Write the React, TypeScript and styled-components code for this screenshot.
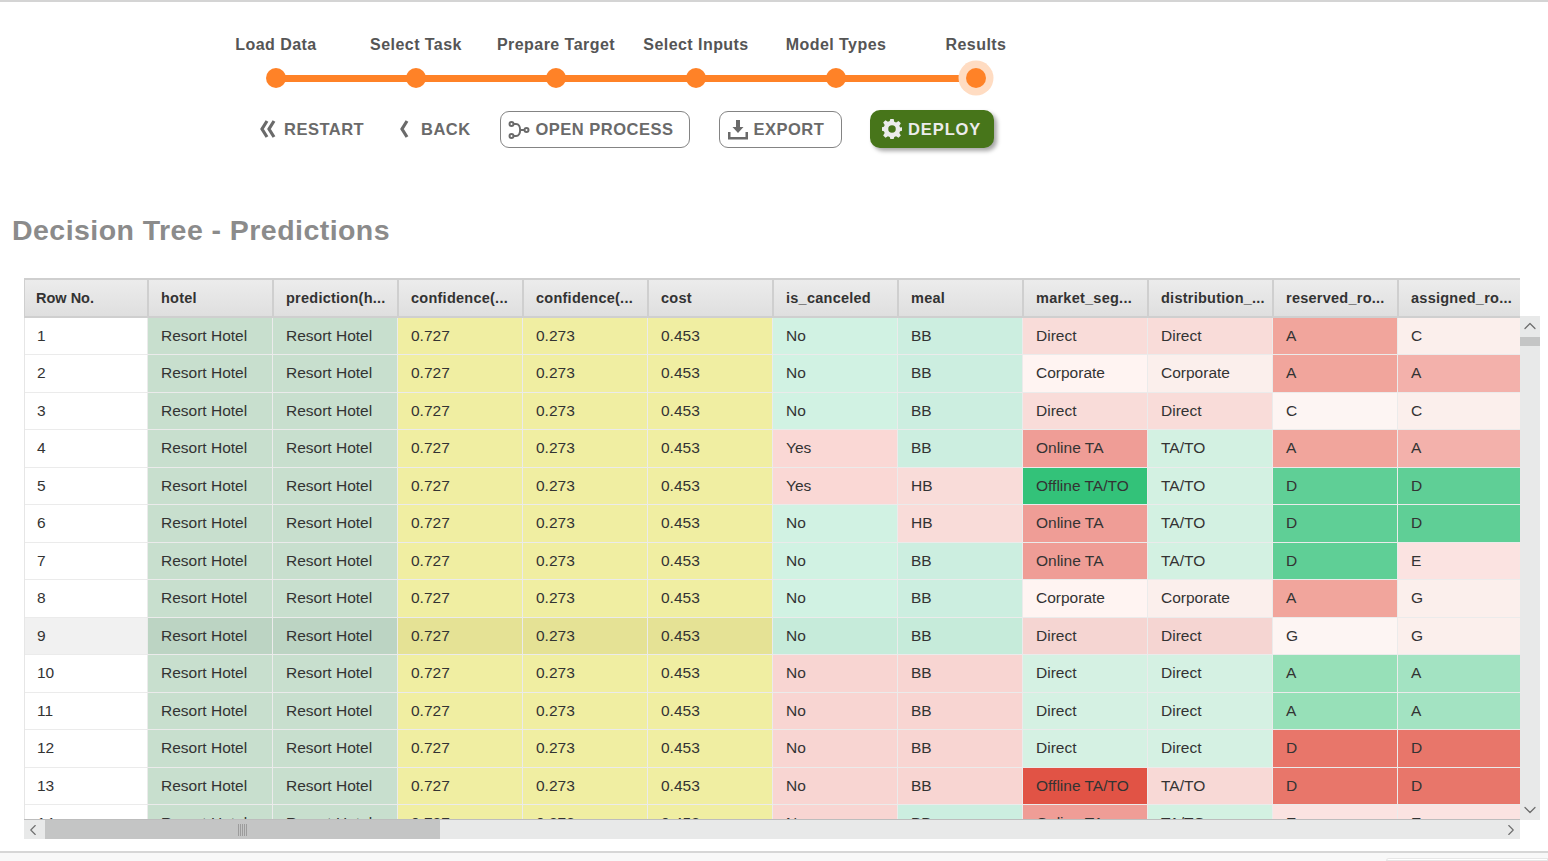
import React from "react";
import styled, { createGlobalStyle } from "styled-components";
import { ChevronLeft, ChevronRight, ChevronUp, ChevronDown } from "lucide-react";

const Global = createGlobalStyle`
  html, body {
    margin: 0;
    padding: 0;
    background: #fff;
    font-family: "Liberation Sans", Arial, sans-serif;
  }
`;

const Page = styled.div`
  width: 1548px;
  height: 861px;
  overflow: hidden;
  display: flex;
  flex-direction: column;
  border-top: 2px solid #d4d4d4;
  box-sizing: border-box;
`;

const Wizard = styled.div`
  padding: 33px 0 0 206px;
`;

const Steps = styled.div`
  display: grid;
  grid-template-columns: repeat(6, 140px);
  width: 840px;
`;

const Step = styled.div`
  display: flex;
  flex-direction: column;
  align-items: center;
  gap: 13px;
`;

const StepLabel = styled.div`
  font-size: 16px;
  line-height: 20px;
  font-weight: 700;
  color: #555;
  letter-spacing: 0.45px;
  white-space: nowrap;
`;

const Track = styled.div<{ $last?: boolean }>`
  position: relative;
  width: 100%;
  height: 20px;
  display: flex;
  justify-content: center;
  align-items: center;

  &::after {
    content: "";
    display: ${(p) => (p.$last ? "none" : "block")};
    position: absolute;
    left: 50%;
    top: 6.5px;
    width: 100%;
    height: 7px;
    background: #ff8227;
  }
`;

const Dot = styled.div<{ $active?: boolean }>`
  position: relative;
  z-index: 1;
  width: 20px;
  height: 20px;
  border-radius: 50%;
  background: #ff8227;
  box-shadow: ${(p) => (p.$active ? "0 0 0 7.5px #ffdcc2" : "none")};
`;

const Actions = styled.div`
  display: flex;
  align-items: center;
  margin: 21px 0 0 53px;
  height: 40px;
`;

const PlainAction = styled.div<{ $w: number; $gap: number }>`
  width: ${(p) => p.$w}px;
  display: flex;
  align-items: center;
  gap: ${(p) => p.$gap}px;
  font-size: 16.5px;
  font-weight: 700;
  color: #6a6a6a;
  letter-spacing: 0.5px;
`;

const OutlineAction = styled.div<{ $w: number; $gap: number; $mr: number }>`
  box-sizing: border-box;
  width: ${(p) => p.$w}px;
  height: 37px;
  margin: 1px ${(p) => p.$mr}px 0 0;
  padding-left: 6.5px;
  border: 1.5px solid #848484;
  border-radius: 9px;
  display: flex;
  align-items: center;
  gap: ${(p) => p.$gap}px;
  font-size: 16.5px;
  font-weight: 700;
  color: #6a6a6a;
  letter-spacing: 0.5px;
`;

const DeployAction = styled.div`
  box-sizing: border-box;
  width: 124px;
  height: 38px;
  padding-left: 12px;
  border-radius: 10px;
  background: #47751a;
  box-shadow: 3px 3px 4px rgba(0, 0, 0, 0.35);
  display: flex;
  align-items: center;
  gap: 6px;
  font-size: 16.5px;
  font-weight: 700;
  color: #ececec;
  letter-spacing: 0.9px;
`;

const Title = styled.h1`
  margin: 63px 0 0 12px;
  font-size: 28.5px;
  line-height: 36px;
  font-weight: 700;
  color: #8b8b8b;
  letter-spacing: 0.45px;
`;

const GridWrap = styled.div`
  margin: 30px 0 0 24px;
  display: grid;
  grid-template-columns: 1496px 20px;
  grid-template-rows: 542px 19px;
  width: 1516px;
`;

const TableClip = styled.div`
  overflow: hidden;
  border-bottom: 1px solid #bdbdbd;
  box-sizing: border-box;
`;

const HeaderRow = styled.div`
  display: grid;
  grid-template-columns: 124px repeat(11, 125px);
  height: 39.5px;
  box-sizing: border-box;
  border-top: 2px solid #cfcfcf;
  border-bottom: 2px solid #cfcfcf;
  border-left: 1px solid #cfcfcf;
  background: linear-gradient(#ececec, #dfdfdf);
`;

const HeaderCell = styled.div`
  box-sizing: border-box;
  padding-left: 12px;
  border-right: 2px solid #cfcfcf;
  display: flex;
  align-items: center;
  font-size: 14.5px;
  font-weight: 700;
  letter-spacing: 0.25px;
  color: #333;
  white-space: nowrap;
  overflow: hidden;

  &:first-child {
    padding-left: 11px;
    letter-spacing: 0;
  }

  &:last-child {
    border-right: none;
  }
`;

const Row = styled.div<{ $hover?: boolean }>`
  display: grid;
  grid-template-columns: 123px repeat(11, 125px);
  height: 37.5px;
  box-sizing: border-box;
  border-left: 1px solid #e6e6e6;
  background: ${(p) => (p.$hover ? "#f1f1f1" : "#fff")};
`;

const Cell = styled.div<{ $bg?: string }>`
  box-sizing: border-box;
  padding-left: 13px;
  display: flex;
  align-items: center;
  font-size: 15.5px;
  color: #333;
  white-space: nowrap;
  background: ${(p) => p.$bg || "transparent"};
  border-right: 1.5px solid #ebebeb;
  border-bottom: 1.5px solid #ebebeb;

  &:first-child {
    padding-left: 12px;
  }

  &:last-child {
    border-right: none;
  }
`;

const VTrack = styled.div`
  background: #e8e9e9;
  margin-top: 38px;
  display: flex;
  flex-direction: column;
  justify-content: space-between;
  align-items: center;
  position: relative;
  color: #6e6e6e;
`;

const VThumb = styled.div`
  position: absolute;
  top: 21px;
  left: 0;
  width: 100%;
  height: 9px;
  background: #c4c5c5;
`;

const HTrack = styled.div`
  background: #e8e9e9;
  display: flex;
  align-items: center;
  justify-content: space-between;
  color: #6e6e6e;
  position: relative;
`;

const HThumb = styled.div`
  position: absolute;
  left: 21px;
  top: 0;
  width: 395px;
  height: 100%;
  background: #c4c5c5;
  display: flex;
  align-items: center;
  justify-content: center;
`;

const Grip = styled.div`
  width: 9px;
  height: 12px;
  background: repeating-linear-gradient(90deg, #9c9c9c 0 1px, transparent 1px 2px);
`;

const Footer = styled.div`
  margin-top: 12px;
  flex: 1;
  border-top: 2px solid #d6d6d6;
  background: #f8f8f8;
  display: flex;
  justify-content: flex-end;
`;

const FooterBox = styled.div`
  width: 160px;
  margin-top: 5px;
  background: #fff;
  border: 1px solid #e6e6e6;
  border-radius: 3px 0 0 0;
`;

const GREEN = "#c8dfce";
const YELLOW = "#f0eea2";
const MINT = "#d1f2e3";
const MINT2 = "#cceee0";
const PINK = "#fad8d5";
const PINK2 = "#f8d5d2";
const GREEN_H = "#bcd4c3";
const YELLOW_H = "#e5e295";
const MINT_H = "#c6ebda";

const DIRECT = "#f9dcd9";
const DIRECT_H = "#f5d5d2";
const GREEN_DIRECT = "#d5f1e3";
const TATO = "#d3f1e2";
const CORP = "#fff4f2";
const CORP2 = "#fbefec";
const ONLINE = "#ef9d96";
const RES_A = "#f1a59c";
const ASG_A = "#f3b1ab";
const LOW = "#fbefec";
const LOW_R = "#fdf5f3";
const D_GREEN = "#5fcf96";
const A_GREEN = "#97e0b8";
const A_GREEN2 = "#a3e3c2";
const D_RED = "#e8766a";
const E_PINK = "#fbe3e1";

const headers = [
  "Row No.",
  "hotel",
  "prediction(h...",
  "confidence(...",
  "confidence(...",
  "cost",
  "is_canceled",
  "meal",
  "market_seg...",
  "distribution_...",
  "reserved_ro...",
  "assigned_ro...",
];

type C = [string, string];

const rest: C[][] = [
  [["No", MINT], ["BB", MINT2], ["Direct", DIRECT], ["Direct", DIRECT], ["A", RES_A], ["C", LOW]],
  [["No", MINT], ["BB", MINT2], ["Corporate", CORP], ["Corporate", CORP2], ["A", RES_A], ["A", ASG_A]],
  [["No", MINT], ["BB", MINT2], ["Direct", DIRECT], ["Direct", DIRECT], ["C", LOW_R], ["C", LOW]],
  [["Yes", PINK], ["BB", MINT2], ["Online TA", ONLINE], ["TA/TO", TATO], ["A", RES_A], ["A", ASG_A]],
  [["Yes", PINK], ["HB", DIRECT], ["Offline TA/TO", "#33c279"], ["TA/TO", TATO], ["D", D_GREEN], ["D", D_GREEN]],
  [["No", MINT], ["HB", DIRECT], ["Online TA", ONLINE], ["TA/TO", TATO], ["D", D_GREEN], ["D", D_GREEN]],
  [["No", MINT], ["BB", MINT2], ["Online TA", ONLINE], ["TA/TO", TATO], ["D", D_GREEN], ["E", E_PINK]],
  [["No", MINT], ["BB", MINT2], ["Corporate", CORP], ["Corporate", CORP2], ["A", RES_A], ["G", LOW]],
  [["No", MINT_H], ["BB", MINT_H], ["Direct", DIRECT_H], ["Direct", DIRECT_H], ["G", LOW_R], ["G", LOW]],
  [["No", PINK2], ["BB", PINK2], ["Direct", GREEN_DIRECT], ["Direct", GREEN_DIRECT], ["A", A_GREEN], ["A", A_GREEN2]],
  [["No", PINK2], ["BB", PINK2], ["Direct", GREEN_DIRECT], ["Direct", GREEN_DIRECT], ["A", A_GREEN], ["A", A_GREEN2]],
  [["No", PINK2], ["BB", PINK2], ["Direct", GREEN_DIRECT], ["Direct", GREEN_DIRECT], ["D", D_RED], ["D", D_RED]],
  [["No", PINK2], ["BB", PINK2], ["Offline TA/TO", "#e15345"], ["TA/TO", "#f8d9d6"], ["D", D_RED], ["D", D_RED]],
  [["No", PINK2], ["BB", MINT2], ["Online TA", ONLINE], ["TA/TO", TATO], ["E", E_PINK], ["E", E_PINK]],
];

const StepItem = ({ label, last }: { label: string; last?: boolean }) => (
  <Step>
    <StepLabel>{label}</StepLabel>
    <Track $last={last}>
      <Dot $active={last} />
    </Track>
  </Step>
);

const stepNames = ["Load Data", "Select Task", "Prepare Target", "Select Inputs", "Model Types", "Results"];

const App = () => {
  return (
    <Page>
      <Global />
      <Wizard>
        <Steps>
          {stepNames.map((s, i) => (
            <StepItem key={s} label={s} last={i === stepNames.length - 1} />
          ))}
        </Steps>
        <Actions>
          <PlainAction $w={140} $gap={7}>
            <svg width="18" height="20" viewBox="0 0 18 20" fill="none" stroke="#6a6a6a" strokeWidth="3.2">
              <path d="M8 2 L3 10 L8 18" />
              <path d="M15 2 L10 10 L15 18" />
            </svg>
            RESTART
          </PlainAction>
          <PlainAction $w={101} $gap={10}>
            <svg width="12" height="20" viewBox="0 0 12 20" fill="none" stroke="#6a6a6a" strokeWidth="3.2">
              <path d="M8 2 L3 10 L8 18" />
            </svg>
            BACK
          </PlainAction>
          <OutlineAction $w={190} $gap={4} $mr={29}>
            <svg width="24" height="20" viewBox="0 0 24 20" fill="none" stroke="#6a6a6a" strokeWidth="2">
              <circle cx="3.5" cy="4" r="2" />
              <circle cx="3.5" cy="16" r="2" />
              <circle cx="18.5" cy="10" r="2" />
              <path d="M5.5 4 H8 C13.5 4 13.5 16 8 16 H5.5 M12 10 H16.5" />
            </svg>
            OPEN PROCESS
          </OutlineAction>
          <OutlineAction $w={123} $gap={5} $mr={28}>
            <svg width="22" height="22" viewBox="0 0 22 22" fill="#6a6a6a">
              <path d="M9 1 H13 V8 H16.5 L11 14 L5.5 8 H9 Z" />
              <path d="M1 13 H3.5 V18 H18.5 V13 H21 V20.5 H1 Z" />
            </svg>
            EXPORT
          </OutlineAction>
          <DeployAction>
            <svg width="20" height="20" viewBox="0 0 24 24" fill="#ececec">
              <path
                fillRule="evenodd"
                d="M10 0 H14 L14.7 3.3 L16.9 4.2 L19.8 2.4 L22.6 5.2 L20.8 8.1 L21.7 10.3 L24 10 V14 L21.7 14.7 L20.8 16.9 L22.6 19.8 L19.8 22.6 L16.9 20.8 L14.7 21.7 L14 24 H10 L9.3 21.7 L7.1 20.8 L4.2 22.6 L1.4 19.8 L3.2 16.9 L2.3 14.7 L0 14 V10 L2.3 9.3 L3.2 7.1 L1.4 4.2 L4.2 1.4 L7.1 3.2 L9.3 2.3 Z M12 7.5 A4.5 4.5 0 1 0 12 16.5 A4.5 4.5 0 1 0 12 7.5 Z"
              />
            </svg>
            DEPLOY
          </DeployAction>
        </Actions>
      </Wizard>
      <Title>Decision Tree - Predictions</Title>
      <GridWrap>
        <TableClip>
          <HeaderRow>
            {headers.map((h, i) => (
              <HeaderCell key={i}>{h}</HeaderCell>
            ))}
          </HeaderRow>
          {rest.map((cells, i) => {
            const hover = i === 8;
            return (
              <Row key={i} $hover={hover}>
                <Cell>{i + 1}</Cell>
                <Cell $bg={hover ? GREEN_H : GREEN}>Resort Hotel</Cell>
                <Cell $bg={hover ? GREEN_H : GREEN}>Resort Hotel</Cell>
                <Cell $bg={hover ? YELLOW_H : YELLOW}>0.727</Cell>
                <Cell $bg={hover ? YELLOW_H : YELLOW}>0.273</Cell>
                <Cell $bg={hover ? YELLOW_H : YELLOW}>0.453</Cell>
                {cells.map(([text, bg], j) => (
                  <Cell key={j} $bg={bg}>
                    {text}
                  </Cell>
                ))}
              </Row>
            );
          })}
        </TableClip>
        <VTrack>
          <ChevronUp size={20} strokeWidth={1.5} />
          <VThumb />
          <ChevronDown size={20} strokeWidth={1.5} />
        </VTrack>
        <HTrack>
          <ChevronLeft size={18} strokeWidth={1.5} />
          <HThumb>
            <Grip />
          </HThumb>
          <ChevronRight size={18} strokeWidth={1.5} />
        </HTrack>
      </GridWrap>
      <Footer>
        <FooterBox />
      </Footer>
    </Page>
  );
};

export default App;
